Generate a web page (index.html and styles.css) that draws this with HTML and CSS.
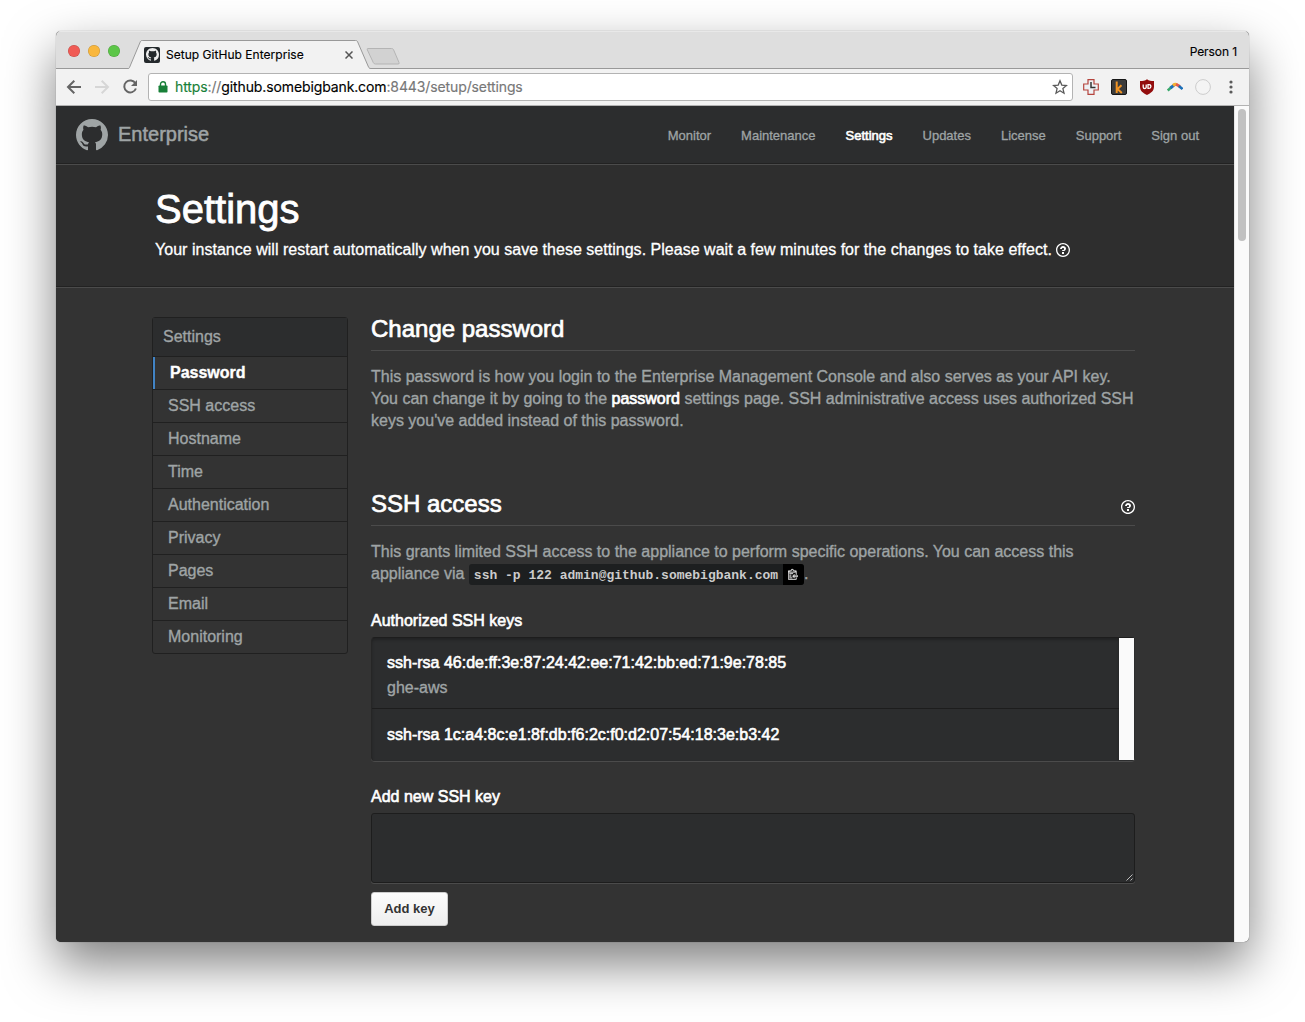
FILE: index.html
```html
<!DOCTYPE html>
<html lang="en">
<head>
<meta charset="utf-8">
<title>Setup GitHub Enterprise</title>
<link rel="stylesheet" href="styles.css">
</head>
<body>
<svg class="defs" width="0" height="0">
  <symbol id="mark" viewBox="0 0 16 16"><path fill-rule="evenodd" d="M8 0C3.58 0 0 3.58 0 8c0 3.54 2.29 6.53 5.47 7.59.4.07.55-.17.55-.38 0-.19-.01-.82-.01-1.49-2.01.37-2.53-.49-2.69-.94-.09-.23-.48-.94-.82-1.13-.28-.15-.68-.52-.01-.53.63-.01 1.08.58 1.23.82.72 1.21 1.87.87 2.33.66.07-.52.28-.87.51-1.07-1.78-.2-3.64-.89-3.64-3.95 0-.87.31-1.59.82-2.15-.08-.2-.36-1.02.08-2.12 0 0 .67-.21 2.2.82.64-.18 1.32-.27 2-.27.68 0 1.36.09 2 .27 1.53-1.04 2.2-.82 2.2-.82.44 1.1.16 1.92.08 2.12.51.56.82 1.27.82 2.15 0 3.07-1.87 3.75-3.65 3.95.29.25.54.73.54 1.48 0 1.07-.01 1.93-.01 2.2 0 .21.15.46.55.38A8.013 8.013 0 0 0 16 8c0-4.42-3.58-8-8-8z"/></symbol>
  <symbol id="question" viewBox="0 0 14 16"><path fill-rule="evenodd" d="M6 10h2v2H6v-2zm4-3.5C10 8.64 8 9 8 9H6c0-.55.45-1 1-1h.5c.28 0 .5-.22.5-.5v-1c0-.28-.22-.5-.5-.5h-1c-.28 0-.5.22-.5.5V7H4c0-1.5 1.5-3 3-3s3 1 3 2.5zM7 2.3c3.14 0 5.7 2.56 5.7 5.7s-2.56 5.7-5.7 5.7A5.71 5.71 0 0 1 1.3 8c0-3.14 2.56-5.7 5.7-5.7zM7 1C3.14 1 0 4.14 0 8s3.14 7 7 7 7-3.14 7-7-3.14-7-7-7z"/></symbol>
</svg>
<div class="window">
  <div class="tabstrip">
    <div class="lights"><i class="red"></i><i class="yellow"></i><i class="green"></i></div>
    <div class="tab">
      <svg class="tab-shape" width="243" height="30" viewBox="0 0 243 30"><path d="M0 28.5C1 28.5 1.3 28 1.7 27L12.2 2C12.7 .8 13.2.5 14.2.5H227.500C228.700.5 229.200.8 229.700 2L240.500 27C241 28 241.500 28.500 243 28.500V30H0Z" fill="#f2f2f2"/><path d="M0 28.500C1 28.500 1.300 28 1.700 27L12.200 2C12.700.8 13.200.5 14.200.5H227.500C228.700.5 229.200.8 229.700 2L240.500 27C241 28 241.500 28.500 243 28.500" fill="none" stroke="#999"/></svg>
      <span class="favicon"><svg width="13" height="13"><use href="#mark"/></svg></span>
      <span class="tab-title">Setup GitHub Enterprise</span>
      <svg class="tab-close" width="8" height="8" viewBox="0 0 8 8"><path d="M.5.5l7 7M7.500.5l-7 7" stroke="#555" stroke-width="1.500"/></svg>
    </div>
    <svg class="newtab" width="35" height="18" viewBox="0 0 35 18"><path d="M2 .5H25.500Q27 .5 27.500 1.600L33 14.500Q33.700 16 32 16H9.500Q8 16 7.400 14.800L1.300 1.800Q.8.500 2 .5Z" fill="#d2d2d2" stroke="#b4b4b4"/></svg>
    <span class="person">Person 1</span>
  </div>
  <div class="toolbar">
    <svg class="navicons" width="92" height="28" viewBox="0 0 92 28" fill="none">
      <path d="M25 14H12.500M18.300 7.700L12 14l6.300 6.300" stroke="#656565" stroke-width="2"/>
      <path d="M39 14H51.500M45.700 7.700L52 14l-6.300 6.300" stroke="#d6d6d6" stroke-width="2"/>
      <path d="M79.400 10.300A6 6 0 1 0 79.900 15.500" stroke="#656565" stroke-width="2"/><path d="M81 7v6h-6z" fill="#656565"/>
    </svg>
    <div class="omnibox">
      <svg width="10" height="12" viewBox="0 0 10 12"><path d="M2.500 5V3.200a2.500 2.500 0 0 1 5 0V5" fill="none" stroke="#188038" stroke-width="1.400"/><rect x=".5" y="4.500" width="9" height="7" rx=".8" fill="#188038"/></svg>
      <span class="url"><span class="scheme">https</span>://<b>github.somebigbank.com</b>:8443/setup/settings</span>
      <svg class="star" width="16" height="16" viewBox="0 0 16 16"><path d="M8 1.700l1.800 4.400 4.700.4-3.600 3.100 1.100 4.600L8 11.700l-4 2.500 1.100-4.600L1.500 6.500l4.700-.4z" fill="none" stroke="#5a5a5a" stroke-width="1.300"/></svg>
    </div>
    <div class="extensions">
      <svg width="16" height="16" viewBox="0 0 16 16"><path d="M5 .7h6V5h4.300v6H11v4.300H5V11H.7V5H5z" fill="#eef1f4" stroke="#b5443d" stroke-width="1.200"/><path d="M8 3v5.500h4.500" fill="none" stroke="#333" stroke-width="1.500"/></svg>
      <svg width="16" height="16" viewBox="0 0 16 16"><rect x=".5" y=".5" width="15" height="15" rx="1.500" fill="#3c3c3c" stroke="#161616"/><path d="M5.700 2.500V14M10.500 6.200L6.500 10l4.300 4" fill="none" stroke="#f29423" stroke-width="2"/></svg>
      <svg width="16" height="16" viewBox="0 0 16 16"><path d="M8 .2C10 1.700 12 2 15 2V7.500C15 12 12 14 8 16 4 14 1 12 1 7.500V2C4 2 6 1.700 8 .2z" fill="#930d0d"/><path d="M4.200 5.500v2.400q0 1.600 1.500 1.600t1.500-1.600V5.500M9 5.700h1q1.900 0 1.900 1.800T10 9.400H9z" fill="none" stroke="#fff" stroke-width="1.300"/></svg>
      <svg width="16" height="16" viewBox="0 0 16 16"><path d="M.7 11.500L4 8.500" stroke="#39a96b" stroke-width="2.600"/><path d="M3.500 9L7 6.200" stroke="#1b6fb8" stroke-width="3"/><path d="M6 6.500Q8 4.800 10 5.700" fill="none" stroke="#f2b134" stroke-width="3"/><path d="M9 5.300L13 7.500" stroke="#e35a4f" stroke-width="3"/><path d="M11.800 7L15.500 10" stroke="#1b6fb8" stroke-width="2.600"/></svg>
      <svg width="16" height="16" viewBox="0 0 16 16"><circle cx="8" cy="8" r="7.400" fill="#f4f4f4" stroke="#ccc"/></svg>
      <svg width="16" height="16" viewBox="0 0 16 16" fill="#5a5a5a"><circle cx="8" cy="3" r="1.600"/><circle cx="8" cy="8" r="1.600"/><circle cx="8" cy="13" r="1.600"/></svg>
    </div>
  </div>
  <div class="viewport">
    <div class="page">
      <header class="header">
        <svg class="logo" width="32" height="32"><use href="#mark"/></svg>
        <span class="brand">Enterprise</span>
        <nav class="nav"><a>Monitor</a><a>Maintenance</a><a class="active">Settings</a><a>Updates</a><a>License</a><a>Support</a><a>Sign out</a></nav>
      </header>
      <section class="hero">
        <h1>Settings</h1>
        <p>Your instance will restart automatically when you save these settings. Please wait a few minutes for the changes to take effect. <svg width="14" height="16"><use href="#question"/></svg></p>
      </section>
      <div class="columns">
        <aside class="menu">
          <div class="menu-head">Settings</div>
          <a class="selected">Password</a><a>SSH access</a><a>Hostname</a><a>Time</a><a>Authentication</a><a>Privacy</a><a>Pages</a><a>Email</a><a>Monitoring</a>
        </aside>
        <main class="main">
          <section class="block password">
            <h2>Change password</h2>
            <p>This password is how you login to the Enterprise Management Console and also serves as your API key.<br>You can change it by going to the <strong>password</strong> settings page. SSH administrative access uses authorized SSH<br>keys you've added instead of this password.</p>
          </section>
          <section class="block">
            <h2>SSH access <svg width="14" height="16"><use href="#question"/></svg></h2>
            <p>This grants limited SSH access to the appliance to perform specific operations. You can access this<br>appliance via <span class="cmd"><code>ssh -p 122 admin@github.somebigbank.com</code><span class="copy"><svg width="10" height="12" viewBox="0 0 14 16"><path fill="#ddd" stroke="#ddd" stroke-width=".4" fill-rule="evenodd" d="M2 13h4v1H2v-1zm5-6H2v1h5V7zm2 3V8l-3 3 3 3v-2h5v-2H9zM4.500 9H2v1h2.500V9zM2 12h2.500v-1H2v1zm9 1h1v2c-.02.28-.11.52-.3.7-.19.18-.42.28-.7.3H1c-.55 0-1-.45-1-1V4c0-.55.45-1 1-1h3c0-1.110.89-2 2-2 1.110 0 2 .89 2 2h3c.55 0 1 .45 1 1v5h-1V6H1v9h10v-2zM2 5h8c0-.55-.45-1-1-1H8c-.55 0-1-.45-1-1s-.45-1-1-1-1 .45-1 1-.45 1-1 1H3c-.55 0-1 .45-1 1z"/></svg></span></span>.</p>
            <h3>Authorized SSH keys</h3>
            <div class="keys">
              <div class="keys-list">
                <div class="key"><b>ssh-rsa 46:de:ff:3e:87:24:42:ee:71:42:bb:ed:71:9e:78:85</b><span>ghe-aws</span></div>
                <div class="key"><b>ssh-rsa 1c:a4:8c:e1:8f:db:f6:2c:f0:d2:07:54:18:3e:b3:42</b></div>
              </div>
              <div class="keys-scroll"></div>
            </div>
            <h3 class="add">Add new SSH key</h3>
            <div class="textarea"><svg width="7" height="7" viewBox="0 0 7 7"><path d="M.5 6.500l6-6M4.500 6.500l2-2" stroke="#ccc" stroke-width=".9"/></svg></div>
            <button class="btn">Add key</button>
          </section>
        </main>
      </div>
    </div>
    <div class="scrollbar"><div class="thumb"></div></div>
  </div>
</div>
</body>
</html>
```
FILE: styles.css
```css
* { box-sizing: border-box; }
body {
  margin: 0;
  height: 1022px;
  padding: 31px 56px 0;
  overflow: hidden;
  background: #fff;
  font: 16px/22px "Liberation Sans", Arial, sans-serif;
}
.defs { position: absolute; }
svg { display: block; flex: none; }
h1, h2, h3, p { margin: 0; font-weight: 400; }

.window {
  display: flex;
  flex-direction: column;
  width: 1193px;
  height: 911px;
  border-radius: 5px;
  overflow: hidden;
  background: #333;
  box-shadow: 0 0 1px rgba(0,0,0,.5), 0 22px 50px rgba(0,0,0,.5);
}

/* Browser chrome */
.tabstrip {
  display: flex;
  align-items: flex-end;
  height: 38px;
  background: #dedede;
  box-shadow: inset 0 -1px #999, inset 0 1px #e8e8e8;
  font: 12px/16px Inter, sans-serif;
  color: #111;
}
.lights { display: flex; gap: 8px; width: 72px; padding: 0 0 12px 12px; }
.lights i { width: 12px; height: 12px; border-radius: 50%; box-shadow: inset 0 0 0 .5px rgba(0,0,0,.2); }
.red { background: #f05b55; }
.yellow { background: #f9b73d; }
.green { background: #5cc648; }
.tab { position: relative; display: flex; align-items: center; width: 243px; height: 29px; padding: 0 16px; }
.tab-shape { position: absolute; left: 0; top: 0; }
.favicon { position: relative; display: grid; place-items: center; width: 16px; height: 16px; border-radius: 2px; background: #24292c; color: #eee; fill: #eee; }
.tab-title { position: relative; margin-left: 6px; flex: 1; white-space: nowrap; letter-spacing: .03px; color: #000; -webkit-text-stroke: .15px; }
.tab-close { position: relative; margin-right: 2px; }
.newtab { margin: 0 0 3px -5px; }
.person { margin: 0 12px 9px auto; letter-spacing: -.08px; color: #000; -webkit-text-stroke: .15px; }
.toolbar {
  display: flex;
  align-items: center;
  height: 37px;
  background: #f2f2f2;
  border-bottom: 1px solid #b2b2b2;
}
.omnibox {
  display: flex;
  align-items: center;
  width: 925px;
  height: 28px;
  padding: 0 4px 0 9px;
  border: 1px solid #b3b3b3;
  border-radius: 3px;
  background: #fff;
  font: 14px/20px Inter, sans-serif;
  color: #777;
}
.url { margin-left: 7px; flex: 1; white-space: nowrap; letter-spacing: -.115px; -webkit-text-stroke: .15px; }
.url b { font-weight: 400; color: #000; }
.scheme { color: #188038; }
.extensions { display: flex; gap: 12px; margin-left: 10px; }

/* Page */
.viewport { display: flex; flex: 1; min-height: 0; }
.page { width: 1178px; background: #333; color: #9fa4a5; }
.scrollbar { width: 15px; padding: 3px 3px 0 4px; background: #fafafa; box-shadow: inset 1px 0 #e6e6e6; }
.thumb { width: 8px; height: 132px; border-radius: 4px; background: #c1c1c1; }
.header {
  display: flex;
  align-items: center;
  height: 58px;
  padding: 0 35px 0 20px;
  background: #2c2d2e;
  border-bottom: 1px solid #222;
  color: #9fa4a5;
}
.logo { fill: #9fa4a5; }
.brand { margin: 0 0 2px 10px; font-size: 20px; -webkit-text-stroke: .5px; }
.nav { display: flex; gap: 30px; margin: 2px 0 0 auto; font-size: 13px; -webkit-text-stroke: .3px; }
.nav .active { color: #fff; -webkit-text-stroke: .6px; }
.hero {
  height: 124px;
  padding: 20px 99px 0;
  background: #2e2e2e;
  border-top: 1px solid #4b4b4b;
  border-bottom: 1px solid #4b4b4b;
  box-shadow: inset 0 -1px #222;
  color: #fff;
}
h1 { font-size: 40px; line-height: 48px; -webkit-text-stroke: .8px; }
.hero p { line-height: 22px; margin-top: 6px; white-space: nowrap; letter-spacing: .024px; -webkit-text-stroke: .3px; }
.hero p svg { display: inline-block; vertical-align: -3px; fill: #fff; }
.columns { display: flex; gap: 23px; padding: 29px 0 0 96px; }
.menu { width: 196px; height: 337px; border: 1px solid #202020; border-radius: 3px; -webkit-text-stroke: .35px; }
.menu-head { height: 38px; padding-left: 10px; line-height: 38px; background: #2c2d2e; }
.menu a { display: block; height: 33px; padding-left: 15px; line-height: 32px; border-top: 1px solid #202020; }
.menu .selected { padding-left: 15px; border-left: 2px solid #4183c4; border-top: 0; box-shadow: 0 -1px #202020; margin-top: 1px; height: 32px; font-weight: 700; color: #fff; }
.main { width: 764px; }
.password { height: 175px; }
h2 {
  display: flex;
  align-items: center;
  justify-content: space-between;
  height: 34px;
  padding-bottom: 10px;
  border-bottom: 1px solid #4b4b4b;
  font-size: 24px;
  line-height: 24px;
  color: #fff;
  -webkit-text-stroke: .7px;
}
h2 svg { fill: #fff; margin-top: 6px; }
svg { -webkit-text-stroke: 0; }
.block p { margin-top: 15px; white-space: nowrap; -webkit-text-stroke: .35px; }
.block strong { font-weight: 400; color: #fff; -webkit-text-stroke: .7px; }
.cmd { display: inline-flex; height: 21px; vertical-align: middle; border-radius: 3px; overflow: hidden; background: #1d1f20; color: #ccc; -webkit-text-stroke: 0; }
code { padding: 0 5px; font: bold 13px/23px "Liberation Mono", monospace; }
.copy { display: grid; place-items: center; width: 21px; padding: 0 1px 1px 0; background: #000; }
h3 { margin-top: 25px; font-size: 16px; line-height: 22px; color: #fff; -webkit-text-stroke: .6px; }
.keys { display: flex; height: 124px; margin-top: 5px; border-top: 1px solid #1d1d1d; border-left: 1px solid #262626; border-radius: 4px; background: #2c2d2e; box-shadow: 0 1px #4b4b4b; }
.keys-list { flex: 1; box-shadow: inset 0 2px 3px rgba(0,0,0,.25); border-radius: 3px 0 0 0; }
.keys-scroll { width: 15px; height: 122px; margin-right: 1px; background: #fafafa; }
.key { height: 71px; padding: 14px 15px 0; border-bottom: 1px solid #1d1d1d; }
.key + .key { height: auto; padding-top: 15px; border: 0; }
.key b { display: block; font-weight: 400; color: #fff; -webkit-text-stroke: .6px; }
.key span { display: block; margin-top: 3px; -webkit-text-stroke: .35px; }
.add { margin-top: 25px; }
.textarea { display: flex; align-items: flex-end; justify-content: flex-end; height: 70px; margin-top: 5px; padding: 1px; border: 1px solid #1d1d1d; border-radius: 3px; background: #2c2d2e; box-shadow: 0 1px #4b4b4b; }
.btn { display: block; width: 77px; height: 34px; margin-top: 9px; padding: 0; border: 1px solid #ccc; border-radius: 3px; background: linear-gradient(#fcfcfc, #eee); font: bold 13px/20px "Liberation Sans", Arial, sans-serif; color: #333; }
```
